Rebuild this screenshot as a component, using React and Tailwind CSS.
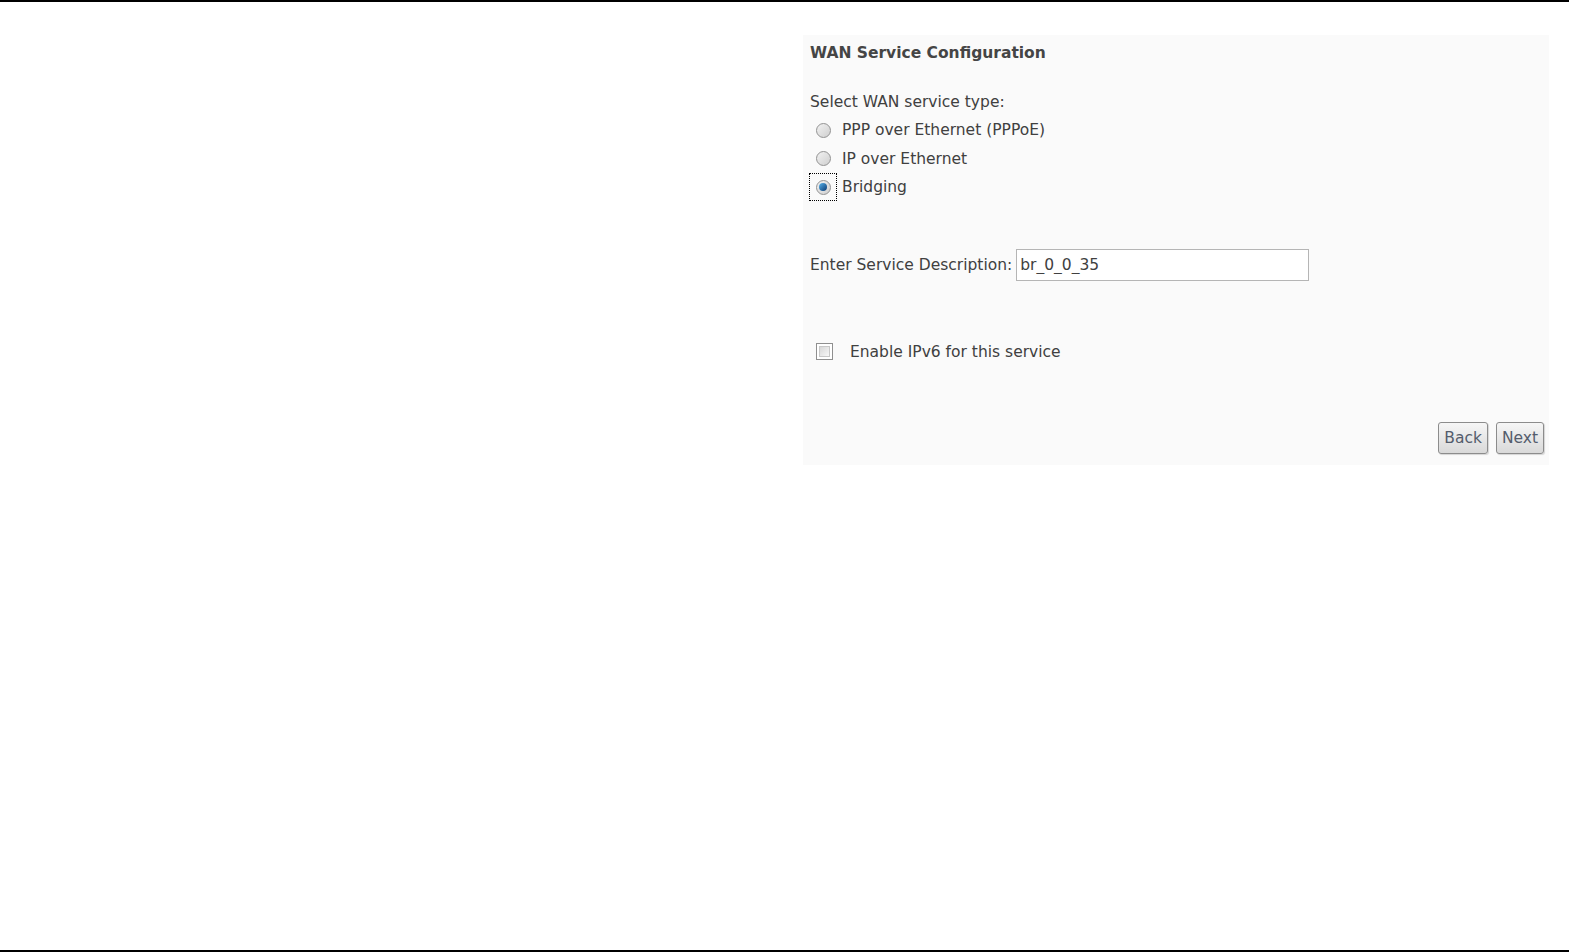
import React, { useState } from 'react';

function Radio({ checked, focused, label, onSelect }) {
    return (
        <label className="flex items-center h-[28.5px] cursor-pointer" onClick={onSelect}>
            <span className={`flex items-center justify-center w-[28px] h-[28px] ${focused ? 'border border-dotted border-black' : 'border border-transparent'}`}>
                <span className="flex items-center justify-center w-[15px] h-[15px] rounded-full border border-[#929292] bg-gradient-to-br from-[#f2f2f2] to-[#cfcfcf]">
                    {checked && <span className="w-[8px] h-[8px] rounded-full bg-gradient-to-br from-[#5ab4ec] to-[#0b3a72]" />}
                </span>
            </span>
            <span className="ml-[5px]">{label}</span>
        </label>
    );
}

function App() {
    const [service, setService] = useState('bridge');
    const [ipv6, setIpv6] = useState(false);
    const [desc, setDesc] = useState('br_0_0_35');

    const options = [
        { id: 'pppoe', label: 'PPP over Ethernet (PPPoE)' },
        { id: 'ipoe', label: 'IP over Ethernet' },
        { id: 'bridge', label: 'Bridging' },
    ];

    return (
        <div className="w-[1569px] h-[952px] bg-white flex flex-col text-[#404040] text-[15.5px] leading-[20px] font-['DejaVu_Sans','Liberation_Sans',sans-serif]">
            <div className="h-[2px] bg-black" />
            <div className="flex-1 pl-[803px] pt-[33px]">
                <div className="w-[746px] h-[430px] bg-[#fafafa] pl-[7px] pt-[8px] pr-[7px] flex flex-col">
                    <h1 className="font-bold text-[15.5px] text-[#454545] leading-[20px]">WAN Service Configuration</h1>

                    <p className="mt-[29px]">Select WAN service type:</p>
                    <div className="mt-[4px] -ml-[1px]">
                        {options.map((o) => (
                            <Radio
                                key={o.id}
                                label={o.label}
                                checked={service === o.id}
                                focused={service === o.id}
                                onSelect={() => setService(o.id)}
                            />
                        ))}
                    </div>

                    <div className="flex items-center mt-[47px]">
                        <span className="pt-[1px]">Enter Service Description:</span>
                        <input
                            value={desc}
                            onChange={(e) => setDesc(e.target.value)}
                            className="ml-[4px] w-[293px] h-[32px] border border-[#b5b5b5] bg-white px-[3px] text-[15.5px] text-[#404040] outline-none"
                        />
                    </div>

                    <label className="flex items-center mt-[61px] ml-[6px] cursor-pointer">
                        <input type="checkbox" checked={ipv6} onChange={(e) => setIpv6(e.target.checked)} className="sr-only" />
                        <span className="w-[17px] h-[17px] border border-[#8f8f8f] bg-white p-[2px]">
                            <span className="block w-full h-full border border-[#c8c8c8] bg-gradient-to-br from-[#d8d8d8] to-[#f8f8f8]" />
                        </span>
                        <span className="ml-[17px]">Enable IPv6 for this service</span>
                    </label>

                    <div className="flex justify-end gap-[8px] mt-auto mb-[11px] -mr-[2px]">
                        <button className="h-[32px] px-[5px] rounded-[3px] border border-[#8c8c8c] bg-gradient-to-b from-[#f6f6f6] to-[#d9d9d9] text-[#545c6c] shadow-[1px_1px_1px_rgba(0,0,0,0.15)]">
                            Back
                        </button>
                        <button className="h-[32px] px-[5px] rounded-[3px] border border-[#8c8c8c] bg-gradient-to-b from-[#f6f6f6] to-[#d9d9d9] text-[#545c6c] shadow-[1px_1px_1px_rgba(0,0,0,0.15)]">
                            Next
                        </button>
                    </div>
                </div>
            </div>
            <div className="h-[2px] bg-black" />
        </div>
    );
}

export default App;
